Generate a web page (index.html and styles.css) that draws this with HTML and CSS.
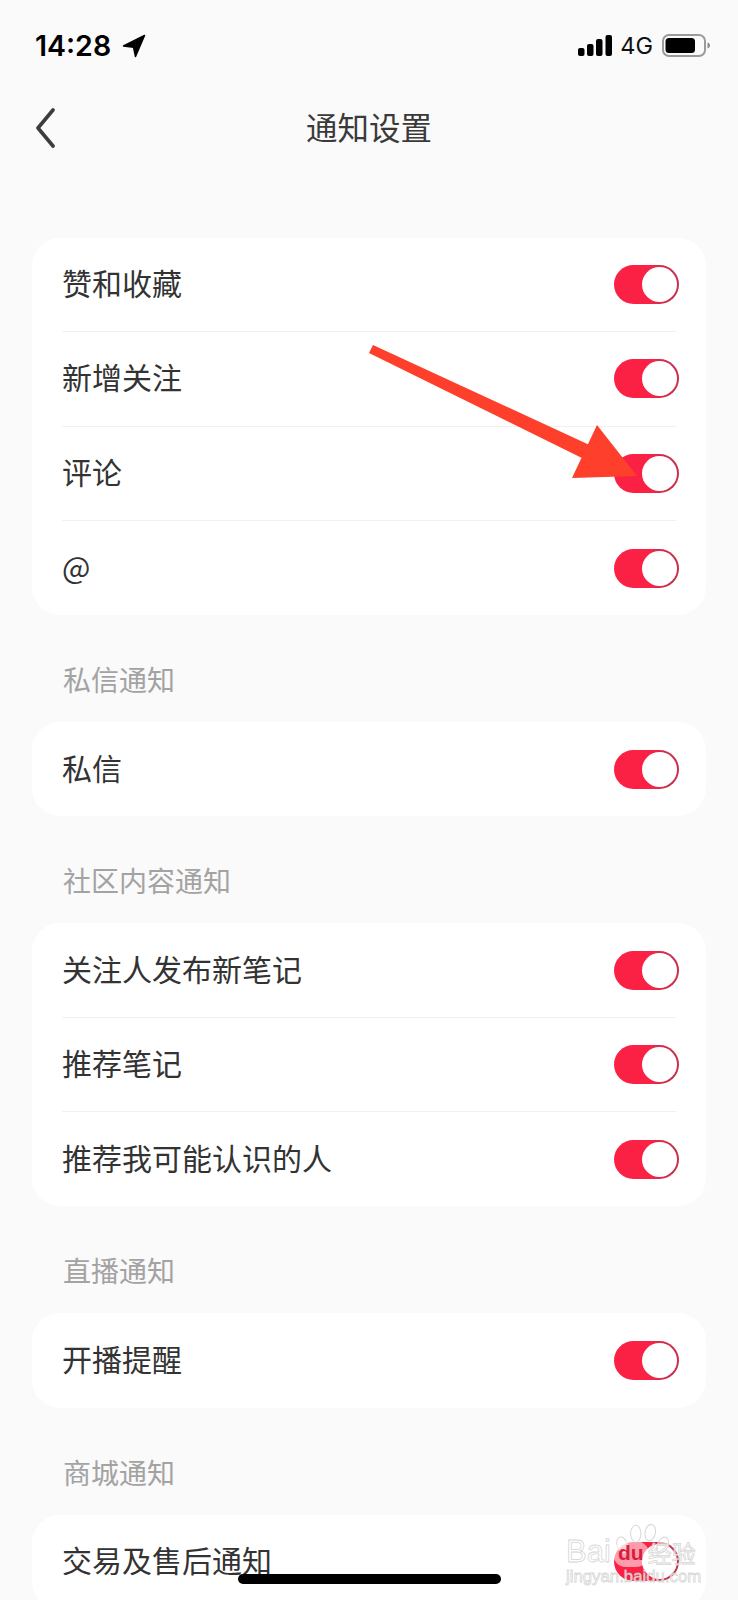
FILE: index.html
```html
<!DOCTYPE html>
<html lang="zh-CN">
  <head>
    <meta charset="UTF-8" />
    <meta name="viewport" content="width=device-width, initial-scale=1.0" />
    <title>通知设置</title>
    <link rel="stylesheet" href="styles.css">
  </head>
  <body>
    <div class="screen">
      <!-- Status bar -->
      <div class="status-bar">
        <div class="status-left">
          <span class="clock">14:28</span>
          <svg class="location" viewBox="0 0 24 24"><path d="M22.500 1.500 1.500 12l10 1.200L13.500 22.500z"/></svg>
        </div>
        <div class="status-right">
          <svg class="signal" viewBox="0 0 34 21">
            <rect x="0" y="13" width="6.500" height="8" rx="2"/>
            <rect x="9" y="9" width="6.500" height="12" rx="2"/>
            <rect x="18" y="4" width="6.500" height="17" rx="2"/>
            <rect x="27.500" y="0" width="6.500" height="21" rx="2"/>
          </svg>
          <span class="network">4G</span>
          <svg class="battery" viewBox="0 0 48 23">
            <rect x="1" y="1" width="42" height="21" rx="6" fill="none" stroke="#9a9a9a" stroke-width="2"/>
            <rect x="3.500" y="4" width="29.500" height="15" rx="3.500" fill="#000"/>
            <path d="M45.500 8.500c1.600.5 2.500 1.600 2.500 3s-.9 2.500-2.500 3z" fill="#8a8a8a"/>
          </svg>
        </div>
      </div>

      <!-- Nav bar -->
      <div class="nav-bar">
        <svg class="back" viewBox="0 0 20 40"><path d="M18 2 3 20l15 18"/></svg>
        <div class="nav-title">通知设置</div>
      </div>

      <div class="group first">
        <div class="row"><span>赞和收藏</span><i class="toggle"></i></div>
        <div class="row"><span>新增关注</span><i class="toggle"></i></div>
        <div class="row"><span>评论</span><i class="toggle"></i></div>
        <div class="row"><span>@</span><i class="toggle"></i></div>
      </div>

      <div class="section-label">私信通知</div>
      <div class="group">
        <div class="row"><span>私信</span><i class="toggle"></i></div>
      </div>

      <div class="section-label">社区内容通知</div>
      <div class="group">
        <div class="row"><span>关注人发布新笔记</span><i class="toggle"></i></div>
        <div class="row"><span>推荐笔记</span><i class="toggle"></i></div>
        <div class="row"><span>推荐我可能认识的人</span><i class="toggle"></i></div>
      </div>

      <div class="section-label">直播通知</div>
      <div class="group">
        <div class="row"><span>开播提醒</span><i class="toggle"></i></div>
      </div>

      <div class="section-label">商城通知</div>
      <div class="group">
        <div class="row"><span>交易及售后通知</span><i class="toggle"></i></div>
      </div>

      <!-- Annotation arrow drawn over the list -->
      <svg class="arrow" viewBox="0 0 738 1600">
        <path d="M373 345 596 448 590 462 369 353z" fill="#fd3f2c"/>
        <path d="M597 425 637 476 572 478z" fill="#fd3f2c"/>
      </svg>

      <div class="home-bar"></div>

      <!-- Stock photo watermark -->
      <div class="watermark">
        <svg class="wm-paw" viewBox="0 0 60 50">
          <ellipse cx="10" cy="24" rx="5" ry="8" transform="rotate(-20 10 24)"/>
          <ellipse cx="23" cy="13" rx="5" ry="8"/>
          <ellipse cx="37" cy="12" rx="5" ry="8" transform="rotate(10 37 12)"/>
          <ellipse cx="49" cy="24" rx="5" ry="8" transform="rotate(25 49 24)"/>
        </svg>
        <div class="wm-top"><span class="wm-bai">Bai</span><span class="wm-du">du</span><span class="wm-cn">经验</span></div>
        <div class="wm-url">jingyan.baidu.com</div>
      </div>
    </div>
  </body>
</html>
```

FILE: styles.css
```css
* {
  box-sizing: border-box;
}

html,
body {
  margin: 0;
  padding: 0;
}

body {
  background: #fafafa;
  font-family: "Noto Sans CJK SC", "Noto Sans", sans-serif;
}

.screen {
  position: relative;
  width: 738px;
  height: 1600px;
  overflow: hidden;
}

/* Status bar */
.status-bar {
  height: 90px;
  padding: 33px 28px 0 35px;
  display: flex;
  justify-content: space-between;
  align-items: flex-start;
  color: #000;
}

.status-left,
.status-right {
  display: flex;
  align-items: center;
  height: 25px;
}

.clock {
  font-family: Inter, sans-serif;
  font-size: 28.5px;
  font-weight: 600;
  line-height: 25px;
}

.location {
  width: 24px;
  height: 24px;
  margin-left: 11px;
  fill: #000;
  stroke: #000;
  stroke-width: 1.5;
  stroke-linejoin: round;
}

.signal {
  width: 34px;
  height: 21px;
  fill: #000;
}

.network {
  font-family: Inter, sans-serif;
  font-size: 23.5px;
  line-height: 25px;
  margin: 0 9px 0 8px;
  color: #111;
}

.battery {
  width: 48px;
  height: 23px;
}

/* Nav */
.nav-bar {
  position: relative;
  height: 76px;
  display: flex;
  align-items: center;
  justify-content: center;
}

.back {
  position: absolute;
  left: 35px;
  top: 18px;
  width: 20px;
  height: 40px;
  fill: none;
  stroke: #3c3c3c;
  stroke-width: 3.6;
  stroke-linecap: round;
  stroke-linejoin: round;
}

.nav-title {
  font-size: 31.5px;
  color: #3a3a3a;
  line-height: 44px;
  margin-bottom: 4px;
}

/* Groups */
.group {
  margin: 0 32px;
  padding: 0 30px;
  background: #fff;
  border-radius: 28px;
}

.group.first {
  margin-top: 72px;
}

.row {
  height: 94.3px;
  display: flex;
  align-items: center;
  justify-content: space-between;
  font-size: 30px;
  color: #333;
  border-bottom: 1.5px solid #f0f0f0;
}

.row span {
  margin-bottom: 5px;
}

.row:last-child {
  border-bottom: 0;
}

.toggle {
  position: relative;
  display: block;
  width: 65px;
  height: 39px;
  margin-right: -3px;
  border-radius: 20px;
  background: linear-gradient(to right, #fb2145 55%, #c8304f 85%);
}

.toggle::after {
  content: "";
  position: absolute;
  right: 2px;
  top: 2px;
  width: 35px;
  height: 35px;
  border-radius: 50%;
  background: #fff;
}

.section-label {
  height: 107px;
  padding: 44px 0 0 63px;
  font-size: 28px;
  line-height: 40px;
  color: #a3a3a3;
}

/* Overlays */
.arrow {
  position: absolute;
  left: 0;
  top: 0;
  width: 738px;
  height: 1600px;
  pointer-events: none;
}

.home-bar {
  position: absolute;
  left: 238px;
  top: 1574px;
  width: 263px;
  height: 10px;
  border-radius: 5px;
  background: #000;
}

.watermark {
  position: absolute;
  left: 566px;
  top: 1537px;
  width: 134px;
  font-family: "Liberation Sans", sans-serif;
  color: rgba(255, 255, 255, 0.75);
  -webkit-text-stroke: 0.8px rgba(200, 200, 200, 0.75);
}

.wm-paw {
  position: absolute;
  left: 46px;
  top: -17px;
  width: 62px;
  height: 52px;
  fill: rgba(255, 255, 255, 0.55);
  stroke: rgba(205, 205, 205, 0.8);
  stroke-width: 1;
}

.wm-top {
  position: relative;
  display: flex;
  align-items: center;
  height: 30px;
  white-space: nowrap;
}

.wm-bai {
  font-size: 31px;
}

.wm-du {
  width: 36px;
  height: 26px;
  margin: 4px 0 0 2px;
  border-radius: 13px;
  background: rgba(255, 255, 255, 0.55);
  text-align: center;
  font-size: 21px;
  line-height: 24px;
  font-weight: bold;
  color: #d81e40;
  -webkit-text-stroke: 0;
}

.wm-cn {
  margin-left: -1px;
  font-family: "Noto Sans CJK SC", sans-serif;
  font-size: 24px;
}

.wm-url {
  position: relative;
  margin-top: 1px;
  font-size: 16.8px;
  line-height: 18px;
  white-space: nowrap;
}
```
